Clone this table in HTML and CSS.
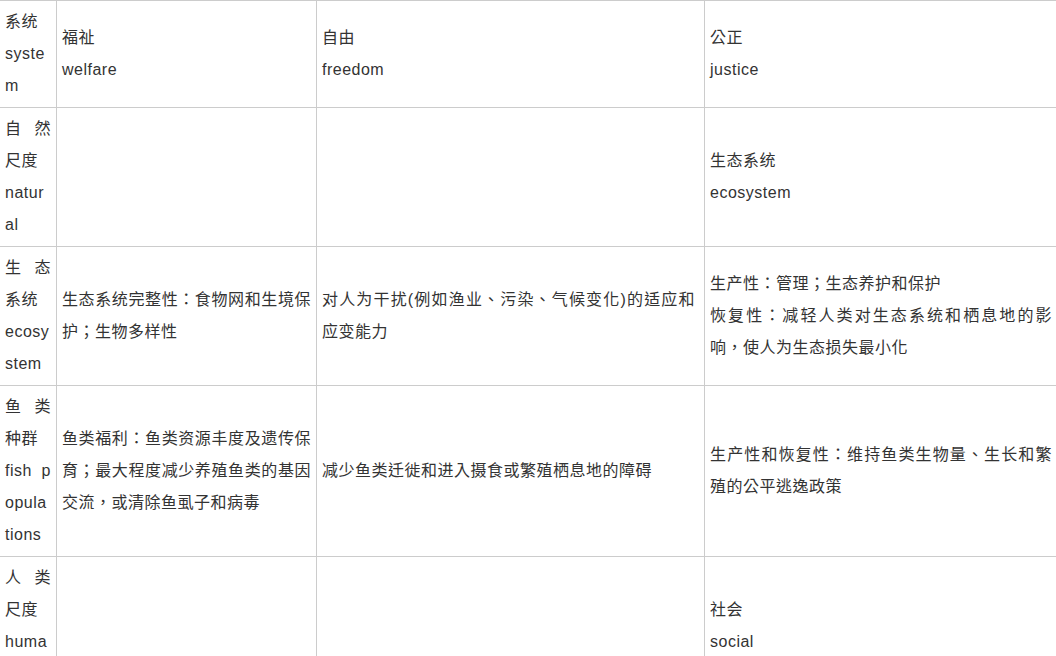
FILE: index.html
```html
<!DOCTYPE html>
<html lang="zh-CN">
<head>
<meta charset="utf-8">
<title>表格</title>
<link rel="stylesheet" href="styles.css">
</head>
<body>
<table class="grid">
  <colgroup>
    <col class="c1">
    <col class="c2">
    <col class="c3">
    <col class="c4">
  </colgroup>
  <tbody>
    <tr>
      <td class="head">系统<br>system</td>
      <td><p>福祉</p><p>welfare</p></td>
      <td><p>自由</p><p>freedom</p></td>
      <td><p>公正</p><p>justice</p></td>
    </tr>
    <tr>
      <td class="head">自然尺度<br>natural</td>
      <td></td>
      <td></td>
      <td><p>生态系统</p><p>ecosystem</p></td>
    </tr>
    <tr>
      <td class="head">生态系统<br>ecosystem</td>
      <td><p>生态系统完整性：食物网和生境保护；生物多样性</p></td>
      <td class="narrow"><p>对人为干扰(例如渔业、污染、气候变化)的适应和应变能力</p></td>
      <td><p>生产性：管理；生态养护和保护</p><p>恢复性：减轻人类对生态系统和栖息地的影响，使人为生态损失最小化</p></td>
    </tr>
    <tr>
      <td class="head">鱼类种群<br>fish populations</td>
      <td><p>鱼类福利：鱼类资源丰度及遗传保育；最大程度减少养殖鱼类的基因交流，或清除鱼虱子和病毒</p></td>
      <td><p>减少鱼类迁徙和进入摄食或繁殖栖息地的障碍</p></td>
      <td><p>生产性和恢复性：维持鱼类生物量、生长和繁殖的公平逃逸政策</p></td>
    </tr>
    <tr>
      <td class="head">人类尺度<br>human</td>
      <td></td>
      <td></td>
      <td><p>社会</p><p>social</p></td>
    </tr>
  </tbody>
</table>
</body>
</html>
```

FILE: styles.css
```css
html, body {
  margin: 0;
  padding: 0;
  background: #ffffff;
  overflow: hidden;
}

body {
  font-family: "Liberation Sans", "Noto Sans CJK TC", sans-serif;
  font-feature-settings: "locl" 0;
  font-size: 16px;
  line-height: 32px;
  letter-spacing: 0.5px;
  color: #333333;
}

.grid {
  border-collapse: collapse;
  table-layout: fixed;
  width: 1058px;
  margin-left: -1px;
}

.c1 { width: 57px; }
.c2 { width: 260px; }
.c3 { width: 388px; }
.c4 { width: 353px; }

.grid td {
  border: 1px solid #cccccc;
  padding: 5px;
  vertical-align: middle;
  text-align: justify;
  word-break: break-all;
}

.grid td.narrow {
  padding-right: 9px;
}

.grid p {
  margin: 0;
}
```
